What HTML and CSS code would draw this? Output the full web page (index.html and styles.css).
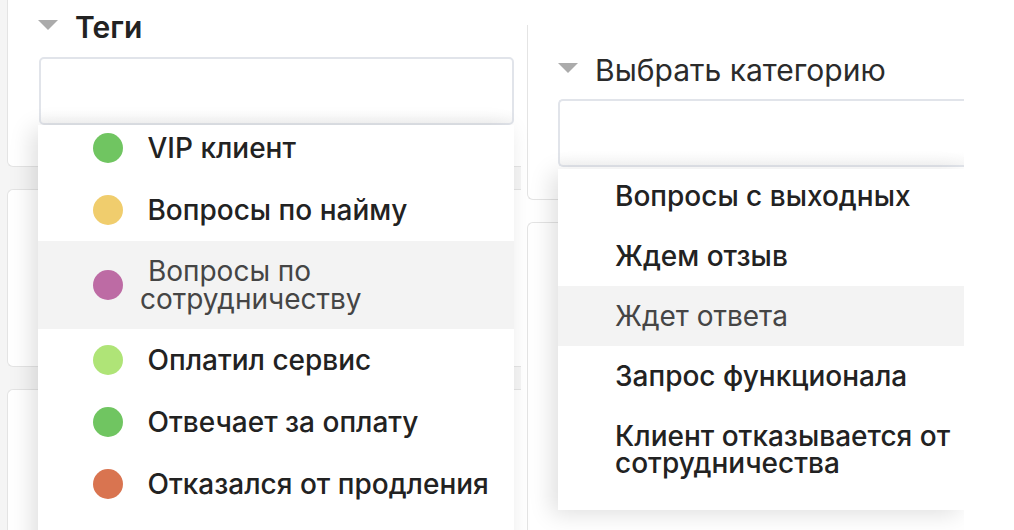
FILE: index.html
```html
<!DOCTYPE html>
<html>
    <head>
        <meta charset="utf-8">
        <meta name="viewport" content="width=device-width, initial-scale=1">
        <title>Теги и категории</title>
        <link rel="stylesheet" href="styles.css">
    </head>
    <body>
        <div class="screen">
            <div class="col col-left">
                <div class="card card-top">
                    <div class="field">
                        <div class="field-title title-tags"><span class="caret"></span>Теги</div>
                        <div class="field-input"></div>
                        <div class="dropdown dropdown-tags">
                            <ul class="menu">
                                <li class="item"><span class="dot dot-green"></span><span class="label"> VIP клиент</span></li>
                                <li class="item"><span class="dot dot-yellow"></span><span class="label"> Вопросы по найму</span></li>
                                <li class="item item-hover"><span class="dot dot-purple"></span><span class="label"> Вопросы по сотрудничеству</span></li>
                                <li class="item"><span class="dot dot-lime"></span><span class="label"> Оплатил сервис</span></li>
                                <li class="item"><span class="dot dot-green"></span><span class="label"> Отвечает за оплату</span></li>
                                <li class="item"><span class="dot dot-orange"></span><span class="label"> Отказался от продления</span></li>
                            </ul>
                        </div>
                    </div>
                </div>
                <div class="card card-mid"></div>
                <div class="card card-mid"></div>
            </div>
            <div class="col col-right">
                <div class="card card-top">
                    <div class="field">
                        <div class="field-title title-cat"><span class="caret"></span>Выбрать категорию</div>
                        <div class="field-input"></div>
                        <div class="dropdown dropdown-cat">
                            <ul class="menu">
                                <li class="item">Вопросы с выходных</li>
                                <li class="item">Ждем отзыв</li>
                                <li class="item item-hover">Ждет ответа</li>
                                <li class="item">Запрос функционала</li>
                                <li class="item">Клиент отказывается от сотрудничества</li>
                            </ul>
                        </div>
                    </div>
                </div>
                <div class="card card-mid"></div>
            </div>
        </div>
    </body>
</html>
```

FILE: styles.css
```css
html, body{
    margin: 0;
    height: 100%;
    background-color: #ffffff;
    font-family: Inter, "Noto Sans", sans-serif;
    color: #222222;
}
.screen{
    display: flex;
    height: 530px;
    overflow: hidden;
}
.col{
    display: flex;
    flex-direction: column;
    gap: 22px;
}
.col-left{
    width: 514px;
    padding-left: 7px;
    margin-top: -12px;
    background-color: #f5f5f5;
}
.col-right{
    width: 437px;
    padding-left: 6px;
    padding-top: 25px;
    overflow: hidden;
}
.card{
    background-color: #ffffff;
    border: 1px solid #e4e4e4;
    border-right: none;
    border-radius: 6px 0 0 6px;
    flex-shrink: 0;
}
.col-left .card-top{
    padding: 20px 7px 41px 31px;
}
.col-right .card-top{
    border-top: none;
    border-top-left-radius: 0;
    padding: 27px 0 32px 30px;
}
.col-left .card-mid{
    height: 176px;
}
.col-right .card-mid{
    height: 400px;
}
.field{
    position: relative;
}
.field-title{
    display: flex;
    align-items: center;
    height: 36px;
    font-size: 30px;
    color: #222222;
}
.title-tags{
    font-weight: 600;
    margin-left: -1px;
}
.title-cat{
    font-weight: 400;
    color: #2b2b2b;
}
.caret{
    width: 0;
    height: 0;
    border-left: 10px solid transparent;
    border-right: 10px solid transparent;
    border-top: 10px solid #ababab;
    margin-right: 17px;
    margin-top: -4px;
}
.field-input{
    height: 68px;
    box-sizing: border-box;
    margin-top: 12px;
    border: 2px solid #e1e4ea;
    border-radius: 5px;
    background: linear-gradient(#ffffff 80%, #f7f7f7);
}
.col-right .field-input{
    margin-top: 11px;
    border-top-right-radius: 0;
    border-bottom-right-radius: 0;
    border-right: none;
}
.dropdown{
    position: absolute;
    top: 116px;
    left: -1px;
    right: 0;
    background-color: #ffffff;
    box-shadow: -6px 4px 22px rgba(0, 0, 0, 0.13);
    overflow: hidden;
    z-index: 2;
}
.dropdown-tags{
    height: 470px;
}
.dropdown-cat{
    top: 117px;
    left: 0;
    height: 341px;
}
.menu{
    list-style: none;
    margin: 0;
    padding: 0;
}
.dropdown-tags .menu{
    margin-top: -8px;
}
.dropdown-cat .menu{
    margin-top: -3px;
}
.item{
    display: flex;
    align-items: center;
    font-size: 28px;
    font-weight: 500;
    line-height: 27px;
    color: #222222;
}
.dropdown-tags .item{
    line-height: 28px;
    padding: 16px 20px 16px 55px;
}
.dropdown-cat .item{
    padding: 16.5px 8px 16.5px 57px;
}
.item-hover{
    background-color: #f3f3f3;
    color: #454545;
    font-weight: 400;
}
.label{
    white-space: pre-wrap;
    margin-left: 17px;
}
.dot{
    width: 30px;
    height: 30px;
    border-radius: 50%;
    flex-shrink: 0;
}
.dot-green{
    background-color: #70c561;
}
.dot-yellow{
    background-color: #f0cd6d;
}
.dot-purple{
    background-color: #bd6ba4;
}
.dot-lime{
    background-color: #afe477;
}
.dot-orange{
    background-color: #d97450;
}
```
